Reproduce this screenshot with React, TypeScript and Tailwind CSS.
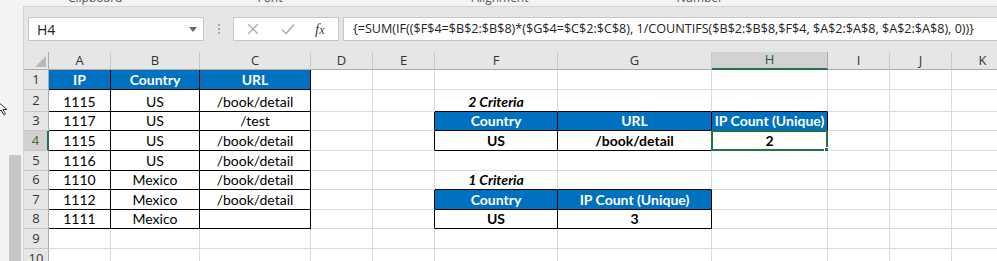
import React from 'react';

const COLS = ['', 'A', 'B', 'C', 'D', 'E', 'F', 'G', 'H', 'I', 'J', 'K'];
const ROWS = [1, 2, 3, 4, 5, 6, 7, 8, 9, 10];

// cell contents keyed by "r-c" (c = column index, A = 1)
const CELLS: Record<string, string> = {
    '1-1': 'IP', '1-2': 'Country', '1-3': 'URL',
    '2-1': '1115', '2-2': 'US', '2-3': '/book/detail',
    '3-1': '1117', '3-2': 'US', '3-3': '/test',
    '4-1': '1115', '4-2': 'US', '4-3': '/book/detail',
    '5-1': '1116', '5-2': 'US', '5-3': '/book/detail',
    '6-1': '1110', '6-2': 'Mexico', '6-3': '/book/detail',
    '7-1': '1112', '7-2': 'Mexico', '7-3': '/book/detail',
    '8-1': '1111', '8-2': 'Mexico',
    '2-6': '2 Criteria',
    '3-6': 'Country', '3-7': 'URL', '3-8': 'IP Count (Unique)',
    '4-6': 'US', '4-7': '/book/detail', '4-8': '2',
    '6-6': '1 Criteria',
    '7-6': 'Country', '7-7': 'IP Count (Unique)',
    '8-6': 'US', '8-7': '3'
};

const inTable = (r: number, c: number) =>
    (r >= 1 && r <= 8 && c >= 1 && c <= 3) ||
    (r >= 3 && r <= 4 && c >= 6 && c <= 8) ||
    (r >= 7 && r <= 8 && c >= 6 && c <= 7);

const isBlue = (r: number, c: number) =>
    (r === 1 && c <= 3) || (r === 3 && c >= 6) || (r === 7 && c >= 6);

const isBold = (r: number, c: number) =>
    (r === 4 && c >= 6) || (r === 8 && c >= 6);

const isLabel = (r: number, c: number) => c === 6 && (r === 2 || r === 6);

const Cell: React.FC<{ r: number; c: number }> = ({ r, c }) => {
    const text = CELLS[`${r}-${c}`];
    const right = inTable(r, c) || inTable(r, c + 1) ? 'border-r-black' : 'border-r-[#d9d9d9]';
    const bottom = inTable(r, c) || inTable(r + 1, c) ? 'border-b-black' : 'border-b-[#d9d9d9]';
    const blue = inTable(r, c) && isBlue(r, c);
    const selected = r === 4 && c === 8;
    return (
        <div
            className={`relative box-border border-r border-b ${right} ${bottom} flex items-end justify-center pb-[1px] leading-[17px] whitespace-nowrap ${
                blue ? 'bg-[#0070c0] text-white font-bold' : 'bg-white text-black'
            } ${isBold(r, c) ? 'font-bold' : ''} ${isLabel(r, c) ? 'font-bold italic' : ''}`}
        >
            {text}
            {selected && (
                <div className="absolute -left-[1px] -top-[1px] -right-[1px] -bottom-[1px] border-2 border-[#217346]">
                    <div className="absolute -right-[4px] -bottom-[4px] w-[6px] h-[6px] bg-[#217346] border border-white" />
                </div>
            )}
        </div>
    );
};

const App: React.FC = () => {
    return (
        <div className="w-[997px] h-[261px] overflow-hidden flex flex-col bg-[#f3f3f3] font-['Open_Sans',sans-serif]">
            {/* ribbon group labels, mostly scrolled off */}
            <div className="h-[6px] shrink-0 relative overflow-hidden text-[12px] text-[#555]">
                <div className="absolute -top-[11px] left-0 w-full flex">
                    <span className="ml-[68px]">Clipboard</span>
                    <span className="ml-[47px] text-[#999] text-[9px]">↘</span>
                    <span className="ml-[80px]">Font</span>
                    <span className="ml-[85px] text-[#999] text-[9px]">↘</span>
                    <span className="ml-[96px]">Alignment</span>
                    <span className="ml-[95px] text-[#999] text-[9px]">↘</span>
                    <span className="ml-[45px]">Number</span>
                    <span className="ml-[40px] text-[#999] text-[9px]">↘</span>
                </div>
            </div>

            <div className="flex flex-1 min-h-0">
                {/* neighbouring pane strip */}
                <div className="w-[23px] shrink-0 flex flex-col bg-[#f3f3f3]">
                    <div className="h-[95px]" />
                    <svg width="10" height="16" viewBox="0 0 10 16" className="ml-[-3px]">
                        <path d="M1 1 L1 12 L4 9 L7 14 L8.5 13 L6 8.5 L10 8.5 Z" fill="white" stroke="#333" strokeWidth="1" />
                    </svg>
                    <div className="h-[38px]" />
                    <div className="ml-[9px] w-[12px] flex-1 bg-[#c6c6c6]" />
                </div>

                <div className="flex-1 min-w-0 flex flex-col border-t border-l border-[#d4d4d4] bg-[#e6e6e6]">
                    {/* formula bar */}
                    <div className="h-[45px] shrink-0 flex items-start pt-[10px] pl-[4px]">
                        <div className="w-[176px] h-[24px] box-border bg-white border border-[#c6c6c6] flex items-center pl-[8px] pr-[6px] text-[14px] text-[#222]">
                            <span className="flex-1">H4</span>
                            <svg width="8" height="5" viewBox="0 0 8 5">
                                <path d="M0 0 L8 0 L4 5 Z" fill="#666" />
                            </svg>
                        </div>
                        <div className="w-[29px] h-[24px] flex flex-col items-center justify-center gap-[2px]">
                            <span className="w-[2px] h-[2px] bg-[#a8a8a8]" />
                            <span className="w-[2px] h-[2px] bg-[#a8a8a8]" />
                            <span className="w-[2px] h-[2px] bg-[#a8a8a8]" />
                        </div>
                        <div className="w-[106px] h-[24px] box-border bg-white border border-[#c6c6c6] flex items-center">
                            <svg width="12" height="12" viewBox="0 0 12 12" className="ml-[13px]">
                                <path d="M1 1 L11 11 M11 1 L1 11" stroke="#b0b0b0" strokeWidth="1.4" />
                            </svg>
                            <svg width="14" height="12" viewBox="0 0 14 12" className="ml-[22px]">
                                <path d="M1 6.5 L5 10.5 L13 1.5" stroke="#b0b0b0" strokeWidth="1.6" fill="none" />
                            </svg>
                            <span className="ml-[20px] font-['Liberation_Serif',serif] italic text-[15px] text-[#444]">
                                f<span className="text-[12px]">x</span>
                            </span>
                        </div>
                        <div className="flex-1 ml-[4px] h-[24px] box-border bg-white border border-r-0 border-[#c6c6c6] flex items-center pl-[9px] text-[12.6px] text-[#222] whitespace-nowrap overflow-hidden">
                            {'{=SUM(IF(($F$4=$B$2:$B$8)*($G$4=$C$2:$C$8), 1/COUNTIFS($B$2:$B$8,$F$4, $A$2:$A$8, $A$2:$A$8), 0))}'}
                        </div>
                    </div>

                    {/* sheet grid */}
                    <div className="grid grid-cols-[25px_62px_89px_111px_62px_62px_123px_154px_116px_62px_62px_62px] grid-rows-[18px_20px_22px_19px_20px_20px_19px_20px_19px_20px_20px] bg-white font-['Lato',sans-serif] text-[14px]">
                        {COLS.map((col, c) =>
                            c === 0 ? (
                                <div key="corner" className="box-border border-r border-b border-r-[#ababab] border-b-[#ababab] bg-[#e6e6e6] flex items-end justify-end p-[2px]">
                                    <svg width="11" height="11" viewBox="0 0 11 11">
                                        <path d="M11 0 L11 11 L0 11 Z" fill="#b9b9b9" />
                                    </svg>
                                </div>
                            ) : col === 'H' ? (
                                <div key={col} className="box-border border-r border-b-2 border-r-[#ababab] border-b-[#217346] bg-[#d2d2d2] flex items-center justify-center text-[13px] text-[#215a32] font-['Open_Sans',sans-serif]">
                                    {col}
                                </div>
                            ) : (
                                <div key={col} className="box-border border-r border-b border-r-[#c8c8c8] border-b-[#ababab] bg-[#e6e6e6] flex items-center justify-center text-[13px] text-[#333] font-['Open_Sans',sans-serif]">
                                    {col}
                                </div>
                            )
                        )}
                        {ROWS.map((r) => (
                            <React.Fragment key={r}>
                                {r === 4 ? (
                                    <div className="box-border border-r-2 border-b border-r-[#217346] border-b-[#c8c8c8] bg-[#d2d2d2] flex items-center justify-center text-[13px] text-[#3e6b2a] font-['Open_Sans',sans-serif]">
                                        {r}
                                    </div>
                                ) : (
                                    <div className="box-border border-r border-b border-r-[#ababab] border-b-[#c8c8c8] bg-[#e6e6e6] flex items-center justify-center text-[13px] text-[#333] font-['Open_Sans',sans-serif]">
                                        {r}
                                    </div>
                                )}
                                {COLS.slice(1).map((_, i) => (
                                    <Cell key={i} r={r} c={i + 1} />
                                ))}
                            </React.Fragment>
                        ))}
                    </div>
                </div>
            </div>
        </div>
    );
};

export default App;
